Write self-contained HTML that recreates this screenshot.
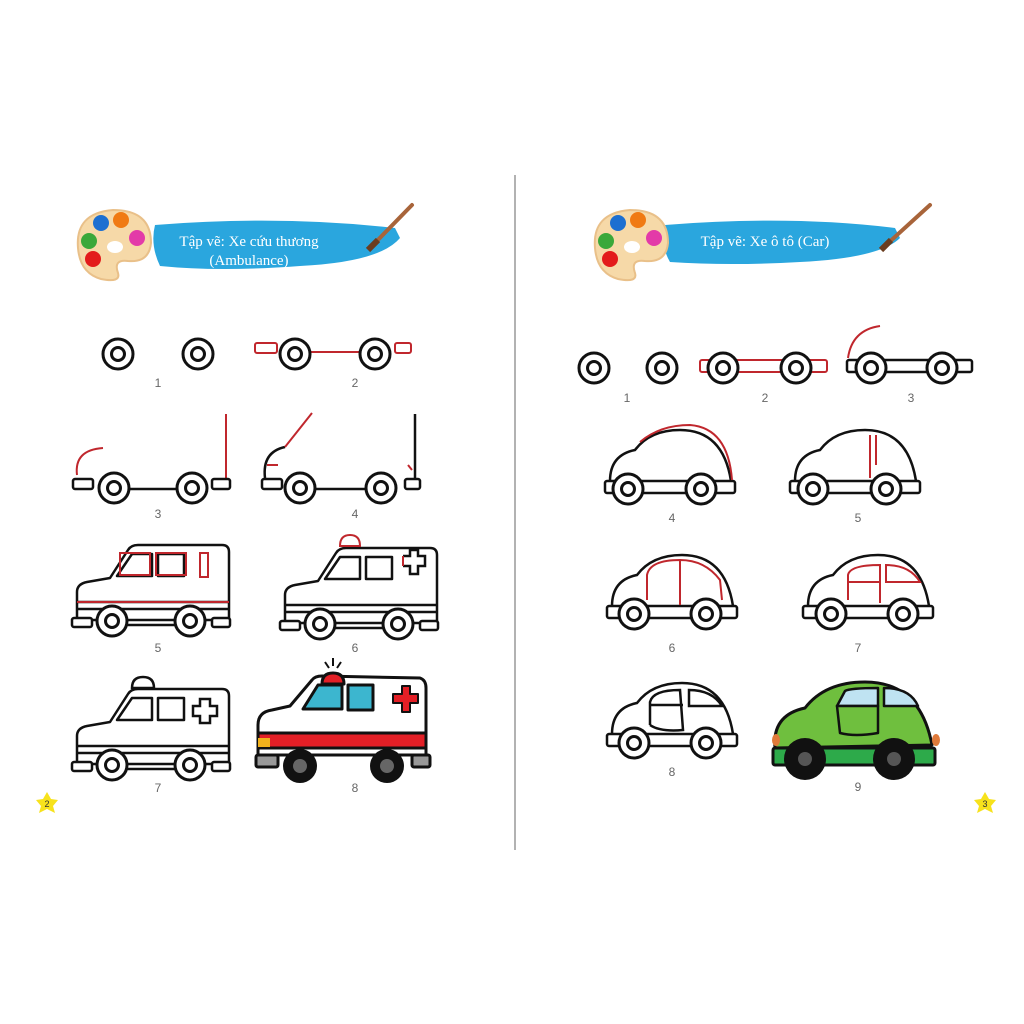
<!DOCTYPE html>
<html><head><meta charset="utf-8"><style>
html,body{margin:0;padding:0;background:#fff;}
svg{display:block}
.t{font-family:"Liberation Serif",serif;fill:#fff;font-size:15px}
.n{font-family:"Liberation Sans",sans-serif;fill:#666;font-size:12px;text-anchor:middle}
</style></head><body>
<svg width="1024" height="1024" viewBox="0 0 1024 1024" xmlns="http://www.w3.org/2000/svg">
<defs>
<g id="wh"><circle r="15" fill="#fff" stroke="#111" stroke-width="3"/><circle r="6.5" fill="#fff" stroke="#111" stroke-width="3"/></g>
<g id="pal">
<path d="M-35,5 Q-38,-30 0,-33 Q38,-33 38,0 Q36,20 15,18 Q0,16 5,30 Q8,40 -12,36 Q-33,30 -35,5Z" fill="#f6d9a8" stroke="#e9c089" stroke-width="2"/>
<circle cx="-12" cy="-20" r="8" fill="#1d6fd1"/><circle cx="8" cy="-23" r="8" fill="#f07a13"/>
<circle cx="-24" cy="-2" r="8" fill="#3aa83a"/><circle cx="24" cy="-5" r="8" fill="#e33aa8"/>
<circle cx="-20" cy="16" r="8" fill="#e31b1b"/><ellipse cx="2" cy="4" rx="8" ry="6" fill="#fff"/>
</g>
<g id="amb" fill="none" stroke="#111" stroke-width="2.5" stroke-linejoin="round">
<path d="M5,78 L5,50 Q5,42 15,40 L38,36 L56,8 Q59,3 66,3 L150,3 Q157,3 157,10 L157,78 Z" fill="#fff"/>
<path d="M45,34 L60,12 L80,12 L80,34 Z M86,12 L112,12 L112,34 L86,34 Z"/>
<path d="M5,60 L157,60 M5,67 L157,67"/>
<rect x="0" y="76" width="20" height="9" rx="2" fill="#fff"/><rect x="140" y="76" width="18" height="9" rx="2" fill="#fff"/>
<path d="M28,83 L130,83"/>
</g>
<g id="car" fill="none" stroke="#111" stroke-width="2.5">
<path d="M5,56 Q5,30 30,25 Q45,5 75,5 Q118,5 126,56" fill="#fff"/>
<rect x="0" y="56" width="130" height="12" rx="2" fill="#fff"/>
</g>
</defs>

<line x1="515" y1="175" x2="515" y2="850" stroke="#999" stroke-width="1.5"/>

<path d="M155,225 Q280,215 395,228 L400,238 Q380,262 300,266 Q220,272 160,266 Q150,245 155,225Z" fill="#2aa6de"/>
<path d="M372,246 L412,205" stroke="#a8643a" stroke-width="4" stroke-linecap="round"/>
<path d="M368,250 L378,240" stroke="#6b3d1f" stroke-width="6"/>
<use href="#pal" x="113" y="243"/>
<text class="t" x="249" y="246" text-anchor="middle">Tập vẽ: Xe cứu thương</text>
<text class="t" x="249" y="265" text-anchor="middle">(Ambulance)</text>

<path d="M665,225 Q790,215 895,228 L900,238 Q880,258 800,262 Q730,266 670,262 Q660,245 665,225Z" fill="#2aa6de"/>
<path d="M885,246 L930,205" stroke="#a8643a" stroke-width="4" stroke-linecap="round"/>
<path d="M881,250 L891,240" stroke="#6b3d1f" stroke-width="6"/>
<use href="#pal" x="630" y="243"/>
<text class="t" x="765" y="246" text-anchor="middle">Tập vẽ: Xe ô tô (Car)</text>

<use href="#wh" x="118" y="354"/><use href="#wh" x="198" y="354"/>
<g fill="none" stroke="#c0272d" stroke-width="2"><rect x="255" y="343" width="22" height="10" rx="2"/><rect x="395" y="343" width="16" height="10" rx="2"/><line x1="305" y1="352" x2="362" y2="352"/></g>
<use href="#wh" x="295" y="354"/><use href="#wh" x="375" y="354"/>

<g fill="none" stroke="#c0272d" stroke-width="2"><path d="M77,475 Q74,450 103,448"/><path d="M226,480 L226,414"/></g>
<g fill="none" stroke="#111" stroke-width="2.5"><rect x="73" y="479" width="20" height="10" rx="2" fill="#fff"/><rect x="212" y="479" width="18" height="10" rx="2" fill="#fff"/><path d="M128,489 L180,489"/></g>
<use href="#wh" x="114" y="488"/><use href="#wh" x="192" y="488"/>

<g fill="none" stroke="#111" stroke-width="2.5"><path d="M265,478 Q262,452 285,447"/><path d="M415,478 L415,414"/><rect x="262" y="479" width="20" height="10" rx="2" fill="#fff"/><rect x="405" y="479" width="15" height="10" rx="2" fill="#fff"/><path d="M315,489 L368,489"/></g>
<g fill="none" stroke="#c0272d" stroke-width="2"><path d="M285,447 L312,413"/><path d="M267,465 L278,465 M408,465 L412,470"/></g>
<use href="#wh" x="300" y="488"/><use href="#wh" x="381" y="488"/>

<use href="#amb" x="72" y="542"/>
<g fill="none" stroke="#c0272d" stroke-width="2"><rect x="120" y="553" width="30" height="22"/><rect x="156" y="553" width="30" height="22"/><rect x="200" y="553" width="8" height="24"/><path d="M77,602 L229,602"/></g>
<use href="#wh" x="112" y="621"/><use href="#wh" x="190" y="621"/>

<use href="#amb" x="280" y="545"/>
<path d="M340,546 Q340,535 350,535 Q360,535 360,546Z" fill="#fff" stroke="#c0272d" stroke-width="2"/>
<path d="M403,556 L410,556 L410,550 L418,550 L418,556 L425,556 L425,566 L418,566 L418,574 L410,574 L410,566 L403,566" fill="none" stroke="#111" stroke-width="2.5"/>
<path d="M403,556 L403,566" stroke="#c0272d" stroke-width="2"/>
<use href="#wh" x="320" y="624"/><use href="#wh" x="398" y="624"/>

<use href="#amb" x="72" y="686"/>
<path d="M132,688 Q132,677 143,677 Q154,677 154,688Z" fill="#fff" stroke="#111" stroke-width="2.5"/>
<path d="M193,706 L200,706 L200,699 L210,699 L210,706 L217,706 L217,716 L210,716 L210,723 L200,723 L200,716 L193,716Z" fill="#fff" stroke="#111" stroke-width="2.5"/>
<use href="#wh" x="112" y="765"/><use href="#wh" x="190" y="765"/>

<g stroke="#111" stroke-width="3" stroke-linejoin="round">
<path d="M258,740 L258,725 Q258,712 272,710 L290,706 L312,680 Q315,676 322,676 L420,678 Q426,680 426,688 L426,755 L258,755Z" fill="#fff"/>
<path d="M258,733 L426,733 L426,748 L258,748Z" fill="#e31f26"/>
<path d="M303,709 L318,685 L342,685 L342,709Z M348,685 L373,685 L373,710 L348,710Z" fill="#3cb6cf"/>
<path d="M322,684 Q322,673 333,673 Q344,673 344,684Z" fill="#e31f26"/>
<path d="M393,694 L402,694 L402,686 L410,686 L410,694 L418,694 L418,703 L410,703 L410,712 L402,712 L402,703 L393,703Z" fill="#e31f26" stroke-width="2"/>
<rect x="256" y="755" width="22" height="12" rx="2" fill="#999"/><rect x="412" y="755" width="18" height="12" rx="2" fill="#999"/>
</g>
<path d="M325,662 L329,668 M333,658 L333,666 M341,662 L337,668" stroke="#111" stroke-width="2"/>
<rect x="258" y="738" width="12" height="9" fill="#f2b21c"/>
<circle cx="300" cy="766" r="17" fill="#111"/><circle cx="300" cy="766" r="7" fill="#666"/>
<circle cx="387" cy="766" r="17" fill="#111"/><circle cx="387" cy="766" r="7" fill="#666"/>

<use href="#wh" x="594" y="368"/><use href="#wh" x="662" y="368"/>
<rect x="700" y="360" width="127" height="12" rx="2" fill="none" stroke="#c0272d" stroke-width="2"/>
<use href="#wh" x="723" y="368"/><use href="#wh" x="796" y="368"/>
<rect x="847" y="360" width="125" height="12" rx="2" fill="#fff" stroke="#111" stroke-width="2.5"/>
<path d="M848,358 Q852,330 880,326" fill="none" stroke="#c0272d" stroke-width="2"/>
<use href="#wh" x="871" y="368"/><use href="#wh" x="942" y="368"/>

<use href="#car" x="605" y="425"/>
<path d="M640,442 Q660,425 690,425 Q728,428 732,480" fill="none" stroke="#c0272d" stroke-width="2"/>
<use href="#wh" x="628" y="489"/><use href="#wh" x="701" y="489"/>

<use href="#car" x="790" y="425"/>
<path d="M870,435 L870,478 M876,435 L876,465" stroke="#c0272d" stroke-width="2"/>
<use href="#wh" x="813" y="489"/><use href="#wh" x="886" y="489"/>

<use href="#car" x="607" y="550"/>
<path d="M647,600 L647,575 Q650,560 680,560 Q705,560 720,580 L722,600 M680,560 L680,605" fill="none" stroke="#c0272d" stroke-width="2"/>
<use href="#wh" x="634" y="614"/><use href="#wh" x="706" y="614"/>

<use href="#car" x="803" y="550"/>
<path d="M848,600 L848,575 Q850,565 880,565 L880,603 M886,565 Q910,565 920,582 L886,582Z M848,582 L880,582" fill="none" stroke="#c0272d" stroke-width="2"/>
<use href="#wh" x="831" y="614"/><use href="#wh" x="903" y="614"/>

<use href="#car" x="607" y="678"/>
<path d="M650,725 L650,702 Q653,690 680,690 L683,730 Q660,732 650,725 M689,690 Q712,690 722,706 L689,706Z M650,705 L683,705" fill="none" stroke="#111" stroke-width="2.5"/>
<use href="#wh" x="634" y="743"/><use href="#wh" x="706" y="743"/>

<g stroke="#111" stroke-width="3" stroke-linejoin="round">
<path d="M775,748 Q772,715 805,708 Q825,682 865,682 Q920,682 932,745Z" fill="#6fbf3e"/>
<path d="M837,706 L845,691 Q850,688 878,688 L878,706Z M884,688 Q910,688 918,706 L884,706Z" fill="#bfe3f2" stroke-width="2.5"/>
<path d="M837,706 L878,706 L878,733 Q855,737 840,733Z" fill="#6fbf3e" stroke-width="2.5"/>
<rect x="773" y="748" width="162" height="17" rx="2" fill="#2daa4a"/>
</g>
<circle cx="805" cy="759" r="21" fill="#111"/><circle cx="805" cy="759" r="7" fill="#555"/>
<circle cx="894" cy="759" r="21" fill="#111"/><circle cx="894" cy="759" r="7" fill="#555"/>
<ellipse cx="776" cy="740" rx="4" ry="6" fill="#e07a3a"/><ellipse cx="936" cy="740" rx="4" ry="6" fill="#e07a3a"/>

<g class="n">
<text x="158" y="387">1</text><text x="355" y="387">2</text>
<text x="158" y="518">3</text><text x="355" y="518">4</text>
<text x="158" y="652">5</text><text x="355" y="652">6</text>
<text x="158" y="792">7</text><text x="355" y="792">8</text>
<text x="627" y="402">1</text><text x="765" y="402">2</text><text x="911" y="402">3</text>
<text x="672" y="522">4</text><text x="858" y="522">5</text>
<text x="672" y="652">6</text><text x="858" y="652">7</text>
<text x="672" y="776">8</text><text x="858" y="791">9</text>
</g>

<path d="M47,792 L51,799 L58,800 L53,806 L55,813 L47,809 L39,813 L41,806 L36,800 L43,799Z" fill="#f7e21c"/>
<text x="47" y="807" font-family="Liberation Sans,sans-serif" font-size="9" text-anchor="middle" fill="#333">2</text>
<path d="M985,792 L989,799 L996,800 L991,806 L993,813 L985,809 L977,813 L979,806 L974,800 L981,799Z" fill="#f7e21c"/>
<text x="985" y="807" font-family="Liberation Sans,sans-serif" font-size="9" text-anchor="middle" fill="#333">3</text>
</svg>
</body></html>
